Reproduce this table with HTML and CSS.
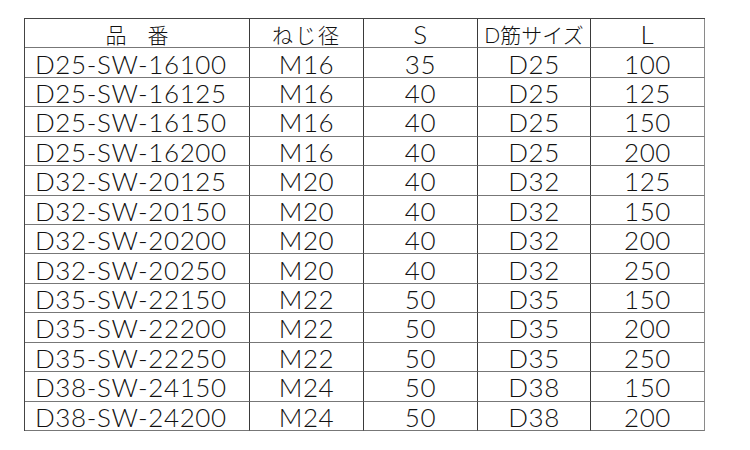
FILE: index.html
```html
<!DOCTYPE html>
<html lang="ja">
<head>
<meta charset="utf-8">
<title>D-SW</title>
<link rel="stylesheet" href="styles.css">
</head>
<body>
<div class="tbl">
  <div class="c h first">品　番</div><div class="c h hs">ねじ径</div><div class="c">S</div><div class="c h">D筋サイズ</div><div class="c last">L</div>
  <div class="c name">D25-SW-16100</div><div class="c">M16</div><div class="c">35</div><div class="c">D25</div><div class="c last">100</div>
  <div class="c name">D25-SW-16125</div><div class="c">M16</div><div class="c">40</div><div class="c">D25</div><div class="c last">125</div>
  <div class="c name">D25-SW-16150</div><div class="c">M16</div><div class="c">40</div><div class="c">D25</div><div class="c last">150</div>
  <div class="c name">D25-SW-16200</div><div class="c">M16</div><div class="c">40</div><div class="c">D25</div><div class="c last">200</div>
  <div class="c name">D32-SW-20125</div><div class="c">M20</div><div class="c">40</div><div class="c">D32</div><div class="c last">125</div>
  <div class="c name">D32-SW-20150</div><div class="c">M20</div><div class="c">40</div><div class="c">D32</div><div class="c last">150</div>
  <div class="c name">D32-SW-20200</div><div class="c">M20</div><div class="c">40</div><div class="c">D32</div><div class="c last">200</div>
  <div class="c name">D32-SW-20250</div><div class="c">M20</div><div class="c">40</div><div class="c">D32</div><div class="c last">250</div>
  <div class="c name">D35-SW-22150</div><div class="c">M22</div><div class="c">50</div><div class="c">D35</div><div class="c last">150</div>
  <div class="c name">D35-SW-22200</div><div class="c">M22</div><div class="c">50</div><div class="c">D35</div><div class="c last">200</div>
  <div class="c name">D35-SW-22250</div><div class="c">M22</div><div class="c">50</div><div class="c">D35</div><div class="c last">250</div>
  <div class="c name">D38-SW-24150</div><div class="c">M24</div><div class="c">50</div><div class="c">D38</div><div class="c last">150</div>
  <div class="c name">D38-SW-24200</div><div class="c">M24</div><div class="c">50</div><div class="c">D38</div><div class="c last">200</div>
</div>
</body>
</html>
```

FILE: styles.css
```css
html, body {
  margin: 0;
  padding: 0;
  background: #ffffff;
}
body {
  padding: 18px 0 0 24px;
  font-family: "Lato", "Noto Sans CJK JP", sans-serif;
  font-weight: 300;
  color: #111111;
}
.tbl {
  display: grid;
  grid-template-columns: 225px 114px 114px 113px 114px;
  grid-template-rows: repeat(14, 1fr);
  width: 681px;
  height: 413px;
  box-sizing: border-box;
  border-top: 1px solid #444444;
  border-left: 1px solid #444444;
}
.c {
  display: flex;
  align-items: center;
  justify-content: center;
  border-right: 1px solid #3a3a3a;
  border-bottom: 1px solid #777777;
  font-size: 26px;
  letter-spacing: 0.6px;
  line-height: 1;
  white-space: nowrap;
  padding-top: 2px;
}
.c.last {
  border-right-color: #8a8a8a;
}
.c.name {
  justify-content: flex-start;
  padding-left: 10px;
}
.c.h {
  font-size: 21px;
  letter-spacing: 0;
  font-weight: 300;
}
.c.hs {
  letter-spacing: 2px;
}
```
